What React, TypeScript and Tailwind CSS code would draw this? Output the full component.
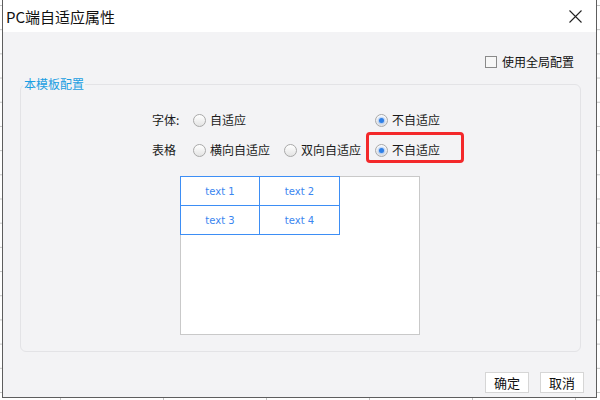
import React from "react";

const cjk = "font-['Microsoft_YaHei','Noto_Sans_CJK_SC',sans-serif]";

function Radio({ checked, label }: { checked?: boolean; label: string }) {
  return (
    <div className="flex items-center h-[20px]">
      <span className="w-[13px] h-[13px] rounded-full border border-[#a9a9a9] bg-[linear-gradient(#ffffff,#e4e4e4)] flex items-center justify-center shrink-0">
        {checked && <span className="w-[5px] h-[5px] rounded-full bg-[#2e7fe6] shadow-[0_0_2px_1px_rgba(70,140,240,0.45)]" />}
      </span>
      <span className="ml-[4px] text-[12px] text-[#1a1a1a] leading-[20px] whitespace-nowrap">{label}</span>
    </div>
  );
}

export default function App() {
  return (
    <div className={`relative w-[600px] h-[400px] overflow-hidden bg-white bg-[linear-gradient(#c4c4c4_1px,transparent_1px),linear-gradient(90deg,#c4c4c4_1px,transparent_1px)] bg-[size:103px_24.2px] bg-[position:60px_5px] ${cjk}`}>
      <div className="absolute left-[2px] top-0 w-[595px] h-[398px] border border-t-0 border-[#5e5e5e] flex flex-col bg-[#f3f3f5]">
        <div className="h-[32px] bg-white flex items-center justify-between pl-[3px] pr-[14px] shrink-0">
          <span className="text-[15px] text-[#111] leading-none">PC端自适应属性</span>
          <svg width="13" height="13" viewBox="0 0 13 13">
            <path d="M0.5 0.5 L12.5 12.5 M12.5 0.5 L0.5 12.5" stroke="#222" strokeWidth="1.1" />
          </svg>
        </div>
        <div className="flex justify-end items-center pr-[22px] mt-[22px] h-[15px]">
          <span className="w-[12px] h-[12px] border border-[#8a8a8a] bg-[#f7f7f7]" />
          <span className="ml-[5px] text-[12px] text-[#111] leading-none">使用全局配置</span>
        </div>
        <fieldset className="ml-[17px] mr-[15px] mt-[6px] border border-[#e3e3e6] rounded-[6px] px-[2px] pb-[16px] min-w-0">
          <legend className="px-[1px] text-[12px] text-[#1a9ee2] leading-[18px]">本模板配置</legend>
          <div className="relative ml-[129px] mt-[17px] grid grid-cols-[41px_91px_91px_auto] gap-y-[10px] w-fit">
            <div className="h-[20px] text-[12px] leading-[20px] text-[#1a1a1a]">字体:</div>
            <Radio label="自适应" />
            <div />
            <Radio checked label="不自适应" />
            <div className="h-[20px] text-[12px] leading-[20px] text-[#1a1a1a]">表格</div>
            <Radio label="横向自适应" />
            <Radio label="双向自适应" />
            <Radio checked label="不自适应" />
            <div className="absolute left-[214px] top-[22px] w-[98px] h-[31px] border-[3px] border-[#f3282a] rounded-[4px]" />
          </div>
          <div className="ml-[157px] mt-[16px] w-[240px] h-[159px] bg-white border border-[#c9c9c9]">
            <div className="-ml-px -mt-px grid grid-cols-[79px_79px] w-fit border border-[#3d8ef5] font-['DejaVu_Sans',sans-serif] text-[10px] text-[#3a86f0]">
              <div className="h-[29px] flex items-center justify-center border-r border-b border-[#3d8ef5]">text 1</div>
              <div className="h-[29px] flex items-center justify-center border-b border-[#3d8ef5]">text 2</div>
              <div className="h-[28px] flex items-center justify-center border-r border-[#3d8ef5]">text 3</div>
              <div className="h-[28px] flex items-center justify-center">text 4</div>
            </div>
          </div>
        </fieldset>
        <div className="flex justify-end gap-[11px] pr-[12px] mt-[20px]">
          <button className="w-[44px] h-[21px] bg-white border border-[#d6d6d6] text-[13px] text-[#111] leading-none">确定</button>
          <button className="w-[44px] h-[21px] bg-white border border-[#d6d6d6] text-[13px] text-[#111] leading-none">取消</button>
        </div>
      </div>
    </div>
  );
}
